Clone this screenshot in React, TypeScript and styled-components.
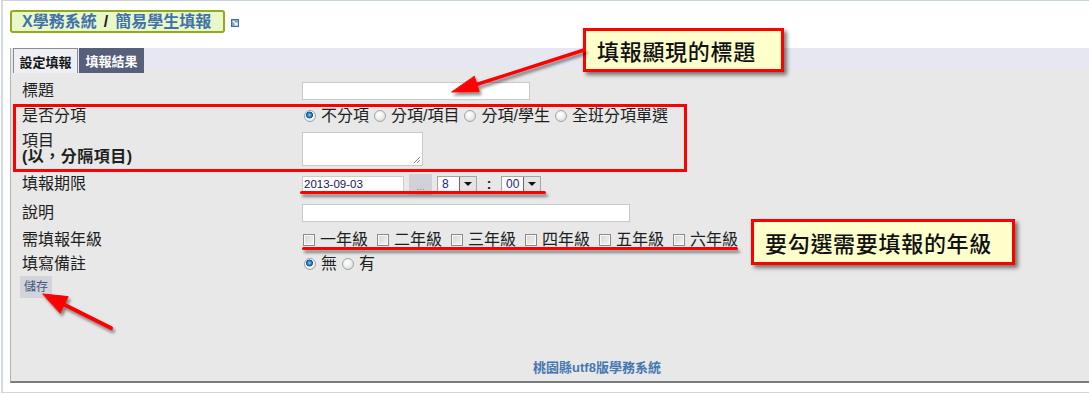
import React from 'react';
import styled, { createGlobalStyle } from 'styled-components';

const GlobalStyle = createGlobalStyle`
  html, body {
    margin: 0;
    padding: 0;
    background: #ffffff;
  }
  body {
    font-family: "Liberation Sans", "Noto Sans CJK TC", sans-serif;
    color: #1e1e1e;
  }
`;

const grades = ['一年級', '二年級', '三年級', '四年級', '五年級', '六年級'];
const splitOptions = ['不分項', '分項/項目', '分項/學生', '全班分項單選'];

const App: React.FC = () => {
  return (
    <Page>
      <GlobalStyle />
      <Frame>
        <Header>
          <TitleBox>
            X學務系統<Slash>/</Slash>簡易學生填報
          </TitleBox>
          <PopIcon width="8" height="8" viewBox="0 0 8 8">
            <rect x="0.5" y="0.5" width="7" height="7" fill="#7fa7cf" stroke="#3f6f9f" />
            <path d="M2 2 L6 6 M6 3.5 L6 6 L3.5 6" stroke="#ffffff" strokeWidth="1.2" fill="none" />
          </PopIcon>
        </Header>

        <Section>
          <TabStrip>
            <Tab $active>設定填報</Tab>
            <Tab>填報結果</Tab>
          </TabStrip>

          <PanelBody>
            <Row $h={24}>
              <Label>標題</Label>
              <TextInput $w={228} $hgt={18} />
            </Row>

            <Row $h={25}>
              <Label>是否分項</Label>
              <OptionGroup>
                {splitOptions.map((opt, i) => (
                  <Option key={opt}>
                    <Radio $checked={i === 0} />
                    <span>{opt}</span>
                  </Option>
                ))}
              </OptionGroup>
            </Row>

            <Row $h={41}>
              <LabelStack>
                <Label>項目</Label>
                <Label $bold>(以，分隔項目)</Label>
              </LabelStack>
              <TextArea />
            </Row>

            <Row $h={30}>
              <Label>填報期限</Label>
              <Inline>
                <DateInput>2013-09-03</DateInput>
                <PickButton>...</PickButton>
                <Select>
                  <SelectValue>8</SelectValue>
                  <SelectArrow />
                </Select>
                <Colon>:</Colon>
                <Select>
                  <SelectValue>00</SelectValue>
                  <SelectArrow />
                </Select>
              </Inline>
            </Row>

            <Row $h={28}>
              <Label>說明</Label>
              <TextInput $w={328} $hgt={18} />
            </Row>

            <Row $h={25}>
              <Label>需填報年級</Label>
              <CheckGroup>
                {grades.map((g) => (
                  <Option key={g}>
                    <Checkbox />
                    <span>{g}</span>
                  </Option>
                ))}
              </CheckGroup>
            </Row>

            <Row $h={24}>
              <Label>填寫備註</Label>
              <OptionGroup>
                <Option>
                  <Radio $checked />
                  <span>無</span>
                </Option>
                <Option>
                  <Radio />
                  <span>有</span>
                </Option>
              </OptionGroup>
            </Row>

            <SaveButton>儲存</SaveButton>

            <Footer>桃園縣utf8版學務系統</Footer>
          </PanelBody>
        </Section>
      </Frame>

      {/* annotations drawn over the screenshot */}
      <RedFrame />
      <Underline style={{ left: 300, top: 191, width: 246 }} />
      <Underline style={{ left: 302, top: 247, width: 436 }} />
      <Callout style={{ left: 583, top: 28, width: 201, height: 44 }}>填報顯現的標題</Callout>
      <Callout style={{ left: 751, top: 219, width: 264, height: 46 }}>要勾選需要填報的年級</Callout>

      <ArrowLayer width="1089" height="394" viewBox="0 0 1089 394">
        <defs>
          <filter id="shade" x="-20%" y="-20%" width="140%" height="160%">
            <feDropShadow dx="2" dy="3" stdDeviation="1.6" floodColor="#000" floodOpacity="0.45" />
          </filter>
        </defs>
        <g filter="url(#shade)" fill="#ff0000" stroke="#ff0000" strokeLinecap="round">
          <line x1="584" y1="50" x2="475" y2="85" strokeWidth="3.5" />
          <polygon points="452,92 479.2,91.7 474.4,76.5" strokeWidth="1" strokeLinejoin="round" />
          <line x1="111" y1="328" x2="63" y2="304" strokeWidth="4" />
          <polygon points="43,294 68.2,296.6 60.2,312.8" strokeWidth="1" strokeLinejoin="round" />
        </g>
      </ArrowLayer>
    </Page>
  );
};

const Page = styled.div`
  position: relative;
  width: 1089px;
  height: 394px;
  overflow: hidden;
  background: #ffffff;
`;

const Frame = styled.div`
  box-sizing: border-box;
  margin-left: 1px;
  height: 393px;
  border-left: 2px solid #d3dae3;
  border-top: 1px solid #cbd3dd;
  border-bottom: 1px solid #cfd6df;
  padding-top: 9px;
  display: flex;
  flex-direction: column;
`;

const Header = styled.div`
  display: flex;
  align-items: center;
  padding-left: 7px;
  gap: 6px;
`;

const TitleBox = styled.div`
  box-sizing: border-box;
  width: 215px;
  height: 23px;
  padding: 0 10px;
  border: 2px solid #8eac1e;
  border-radius: 3px;
  background: #eaf7c9;
  color: #3f72ab;
  font-size: 16px;
  font-weight: bold;
  line-height: 19px;
  white-space: nowrap;
`;

const Slash = styled.span`
  color: #1c1c1c;
  margin: 0 7px;
`;

const PopIcon = styled.svg`
  display: block;
  margin-top: 3px;
`;

const Section = styled.div`
  margin-top: 15px;
  margin-left: 7px;
  border-left: 1px solid #b4b4b4;
  border-bottom: 2px solid #7c7c7c;
  display: flex;
  flex-direction: column;
  flex: 1;
  margin-bottom: 9px;
`;

const TabStrip = styled.div`
  height: 20px;
  background: #e7e7f1;
  display: flex;
  gap: 1px;
  padding-left: 2px;
`;

const Tab = styled.div<{ $active?: boolean }>`
  position: relative;
  z-index: 1;
  box-sizing: border-box;
  width: 65px;
  height: 25px;
  display: flex;
  align-items: center;
  justify-content: center;
  font-size: 13px;
  font-weight: bold;
  color: ${(p) => (p.$active ? '#141414' : '#ffffff')};
  background: ${(p) => (p.$active ? '#eeeef5' : '#56607a')};
  border: ${(p) => (p.$active ? '1px solid #8c8c8c' : 'none')};
  border-bottom: none;
`;

const PanelBody = styled.div`
  flex: 1;
  background: #e8e8e8;
  padding: 11px 0 5px 11px;
  display: flex;
  flex-direction: column;
`;

const Row = styled.div<{ $h: number }>`
  display: grid;
  grid-template-columns: 279px 1fr;
  align-items: center;
  height: ${(p) => p.$h}px;
`;

const Label = styled.div<{ $bold?: boolean }>`
  font-size: 16px;
  line-height: 16px;
  font-weight: ${(p) => (p.$bold ? 'bold' : 'normal')};
  letter-spacing: ${(p) => (p.$bold ? '0.5px' : '0')};
  color: #1e1e1e;
  white-space: nowrap;
`;

const LabelStack = styled.div`
  display: flex;
  flex-direction: column;
`;

const TextInput = styled.div<{ $w: number; $hgt: number }>`
  box-sizing: border-box;
  margin-left: 1px;
  width: ${(p) => p.$w}px;
  height: ${(p) => p.$hgt}px;
  background: #ffffff;
  border: 1px solid #c9c9c9;
`;

const TextArea = styled.div`
  position: relative;
  box-sizing: border-box;
  margin-left: 1px;
  width: 121px;
  height: 34px;
  background: #ffffff;
  border: 1px solid #c9c9c9;

  &::after {
    content: '';
    position: absolute;
    right: 2px;
    bottom: 2px;
    width: 6px;
    height: 6px;
    background: linear-gradient(135deg, transparent 45%, #8a8a8a 46%, #8a8a8a 54%, transparent 55%, transparent 70%, #8a8a8a 71%, #8a8a8a 79%, transparent 80%);
  }
`;

const OptionGroup = styled.div`
  display: flex;
  align-items: center;
  gap: 5px;
  padding-left: 3px;
  font-size: 16px;
  line-height: 16px;
  white-space: nowrap;
`;

const CheckGroup = styled(OptionGroup)`
  gap: 9px;
  padding-left: 2px;
`;

const Option = styled.label`
  display: flex;
  align-items: center;
  gap: 5px;
  color: #1e1e1e;
`;

const Radio = styled.span<{ $checked?: boolean }>`
  box-sizing: border-box;
  width: 12px;
  height: 12px;
  border-radius: 50%;
  border: 1px solid #a3a3a3;
  background: ${(p) =>
    p.$checked
      ? 'radial-gradient(circle at 45% 40%, #8fd0ff 0, #2a86cf 22%, #13548f 40%, #ffffff 46%, #f2f2f2 62%, #d0d0d0 100%)'
      : 'radial-gradient(circle at 40% 35%, #ffffff 0, #f0f0f0 45%, #cfcfcf 100%)'};
`;

const Checkbox = styled.span`
  box-sizing: border-box;
  width: 12px;
  height: 12px;
  border: 1px solid #8a8a8a;
  background: linear-gradient(135deg, #d6d6d6 0%, #f4f4f4 100%);
  box-shadow: inset 0 0 0 1px #fafafa;
`;

const Inline = styled.div`
  display: flex;
  align-items: center;
  gap: 5px;
`;

const DateInput = styled.div`
  box-sizing: border-box;
  margin-left: 1px;
  width: 102px;
  height: 16px;
  padding-left: 1px;
  background: #ffffff;
  border: 1px solid #cccccc;
  font-size: 11.5px;
  line-height: 14px;
  color: #14145a;
`;

const PickButton = styled.div`
  width: 23px;
  height: 21px;
  background: #d1d1d9;
  color: #8a8a8a;
  font-size: 10px;
  line-height: 26px;
  text-align: center;
`;

const Select = styled.div`
  box-sizing: border-box;
  width: 40px;
  height: 16px;
  display: flex;
  background: #ffffff;
  border: 1px solid #a6a6a6;
`;

const SelectValue = styled.span`
  flex: 1;
  padding-left: 4px;
  font-size: 12px;
  line-height: 14px;
  color: #1b1b8a;
`;

const SelectArrow = styled.span`
  box-sizing: border-box;
  width: 17px;
  height: 100%;
  border-left: 1px solid #6a6a6a;
  background: #e4e4e4;
  display: flex;
  align-items: center;
  justify-content: center;

  &::before {
    content: '';
    border-left: 4px solid transparent;
    border-right: 4px solid transparent;
    border-top: 4px solid #111111;
  }
`;

const Colon = styled.span`
  width: 14px;
  text-align: center;
  font-size: 14px;
  font-weight: bold;
  color: #222222;
`;

const SaveButton = styled.div`
  align-self: flex-start;
  margin-left: -2px;
  width: 32px;
  height: 22px;
  background: #d3d3db;
  color: #43557a;
  font-size: 12px;
  line-height: 22px;
  text-align: center;
`;

const Footer = styled.div`
  margin-top: auto;
  padding-left: 83px;
  text-align: center;
  font-size: 13px;
  font-weight: bold;
  line-height: 16px;
  color: #4677b0;
`;

const RedFrame = styled.div`
  position: absolute;
  left: 13px;
  top: 104px;
  width: 674px;
  height: 68px;
  box-sizing: border-box;
  border: 3px solid #ff0000;
`;

const Underline = styled.div`
  position: absolute;
  height: 3px;
  border-radius: 2px;
  background: #ff0000;
  box-shadow: 2px 3px 3px rgba(0, 0, 0, 0.45);
`;

const Callout = styled.div`
  position: absolute;
  box-sizing: border-box;
  border: 3px solid #ff0000;
  background: #ffffcc;
  box-shadow: 3px 3px 4px rgba(0, 0, 0, 0.5);
  display: flex;
  align-items: center;
  padding-left: 11px;
  font-family: "Noto Sans CJK TC", sans-serif;
  font-size: 22px;
  font-weight: 500;
  letter-spacing: 0.7px;
  color: #111111;
  white-space: nowrap;
`;

const ArrowLayer = styled.svg`
  position: absolute;
  left: 0;
  top: 0;
  pointer-events: none;
`;

export default App;
